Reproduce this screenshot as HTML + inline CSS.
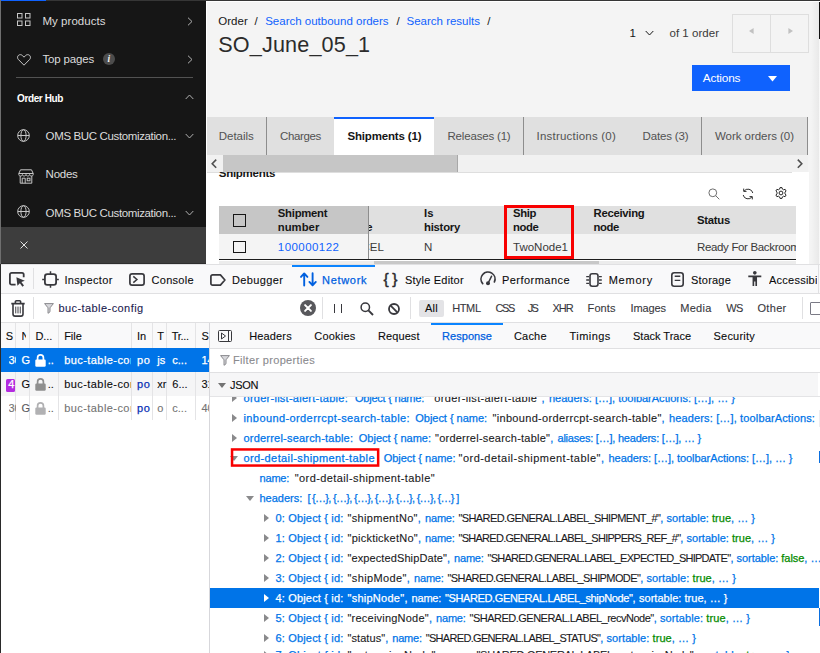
<!DOCTYPE html>
<html><head><meta charset="utf-8"><title>Order details</title>
<style>
*{box-sizing:border-box;margin:0;padding:0}
html,body{width:820px;height:653px;overflow:hidden;background:#fff}
body{position:relative;font-family:"Liberation Sans",sans-serif;font-size:12px;color:#161616}
.a{position:absolute}
.t{position:absolute;white-space:nowrap;line-height:1}
svg{position:absolute;overflow:visible}

#app{position:absolute;left:0;top:0;width:820px;height:264px;background:#f4f4f4;overflow:hidden}
#dt{position:absolute;left:0;top:264px;width:820px;height:389px;background:#fff;overflow:hidden}
.box{position:absolute}

</style></head><body>
<div id="app">
<div class="a" style="left:0px;top:0px;width:206px;height:227px;background:#161616;"></div>
<div class="a" style="left:0px;top:227px;width:206px;height:37px;background:#3d3d3d;"></div>
<div class="a" style="left:0px;top:263px;width:206px;height:1px;background:#2e2e2e;"></div>
<span class="t" style="left:42.50px;top:15.77px;font-size:11.5px;color:#dcdcdc;letter-spacing:0.033px;">My products</span>
<span class="t" style="left:42.50px;top:53.77px;font-size:11.5px;color:#dcdcdc;letter-spacing:-0.153px;">Top pages</span>
<div class="a" style="left:16px;top:77px;width:177px;height:1px;background:#525252;"></div>
<span class="t" style="left:17.00px;top:93.53px;font-size:10.0px;color:#ffffff;letter-spacing:-0.384px;font-weight:700;">Order Hub</span>
<span class="t" style="left:45.60px;top:130.97px;font-size:11.5px;color:#dcdcdc;letter-spacing:-0.364px;">OMS BUC Customization...</span>
<span class="t" style="left:45.60px;top:168.77px;font-size:11.5px;color:#dcdcdc;letter-spacing:-0.250px;">Nodes</span>
<span class="t" style="left:45.60px;top:207.97px;font-size:11.5px;color:#dcdcdc;letter-spacing:-0.364px;">OMS BUC Customization...</span>
<svg style="left:17px;top:13px" width="14" height="13" viewBox="0 0 14 13" fill="none" stroke="#c6c6c6" stroke-width="1"><rect x="0.5" y="0.5" width="4.5" height="4.5"/><rect x="8.5" y="0.5" width="4.5" height="4.5"/><rect x="0.5" y="8" width="4.5" height="4.5"/><rect x="8.5" y="8" width="4.5" height="4.5"/></svg>
<svg style="left:16.5px;top:53.5px" width="14" height="12" viewBox="0 0 14 12" fill="none" stroke="#c6c6c6" stroke-width="1"><path d="M7 11.2 L1.3 5.4 C0.2 4.2 0.3 2.3 1.5 1.3 C2.7 0.3 4.4 0.5 5.5 1.6 L7 3.2 L8.5 1.6 C9.6 0.5 11.3 0.3 12.5 1.3 C13.7 2.3 13.8 4.2 12.7 5.4 Z"/></svg>
<div class="a" style="left:102.8px;top:53px;width:12px;height:12px;border-radius:6px;background:#4c4c4c"></div>
<span class="t" style="left:107.60px;top:54.56px;font-size:9.5px;color:#f4f4f4;font-weight:700;font-style:italic;font-family:'Liberation Serif',serif;">i</span>
<svg style="left:186.5px;top:16.8px" width="6" height="9" viewBox="0 0 6 9" fill="none" stroke="#b0b0b0" stroke-width="1"><path d="M1 0.7 L5 4.5 L1 8.3"/></svg>
<svg style="left:186.5px;top:54.8px" width="6" height="9" viewBox="0 0 6 9" fill="none" stroke="#b0b0b0" stroke-width="1"><path d="M1 0.7 L5 4.5 L1 8.3"/></svg>
<svg style="left:184.5px;top:94.3px" width="9" height="6" viewBox="0 0 9 6" fill="none" stroke="#b0b0b0" stroke-width="1"><path d="M0.7 5 L4.5 1 L8.3 5"/></svg>
<svg style="left:184.5px;top:133px" width="9" height="6" viewBox="0 0 9 6" fill="none" stroke="#b0b0b0" stroke-width="1"><path d="M0.7 1 L4.5 5 L8.3 1"/></svg>
<svg style="left:184.5px;top:210px" width="9" height="6" viewBox="0 0 9 6" fill="none" stroke="#b0b0b0" stroke-width="1"><path d="M0.7 1 L4.5 5 L8.3 1"/></svg>
<svg style="left:17px;top:129px" width="13" height="13" viewBox="0 0 13 13" fill="none" stroke="#c6c6c6" stroke-width="1"><circle cx="6.5" cy="6.5" r="5.8"/><ellipse cx="6.5" cy="6.5" rx="2.6" ry="5.8"/><path d="M0.7 6.5 H12.3"/></svg>
<svg style="left:17px;top:205px" width="13" height="13" viewBox="0 0 13 13" fill="none" stroke="#c6c6c6" stroke-width="1"><circle cx="6.5" cy="6.5" r="5.8"/><ellipse cx="6.5" cy="6.5" rx="2.6" ry="5.8"/><path d="M0.7 6.5 H12.3"/></svg>
<svg style="left:18px;top:168.5px" width="16" height="15" viewBox="0 0 16 15" fill="none" stroke="#c6c6c6" stroke-width="1"><path d="M2.5 0.8 H13.5 L15.2 4.5 V5.5 C15.2 6.5 14.3 7 13.4 7 C12.5 7 11.6 6.5 11.6 5.5 C11.6 6.5 10.7 7 9.8 7 C8.9 7 8 6.5 8 5.5 C8 6.5 7.1 7 6.2 7 C5.3 7 4.4 6.5 4.4 5.5 C4.4 6.5 3.5 7 2.6 7 C1.7 7 0.8 6.5 0.8 5.5 V4.5 Z"/><path d="M0.8 4.5 H15.2"/><path d="M2.2 7 V14.2 H13.8 V7"/><path d="M4.2 14.2 V9.2 H7.2 V14.2"/><rect x="9.2" y="9.2" width="2.8" height="2.6"/></svg>
<svg style="left:20px;top:241px" width="8" height="8" viewBox="0 0 8 8" fill="none" stroke="#e0e0e0" stroke-width="1"><path d="M0.5 0.5 L7.5 7.5 M7.5 0.5 L0.5 7.5"/></svg>
<span class="t" style="left:218.20px;top:16.17px;font-size:11.5px;color:#161616;letter-spacing:0.039px;">Order</span>
<span class="t" style="left:254.60px;top:16.17px;font-size:11.5px;color:#161616;">/</span>
<span class="t" style="left:265.20px;top:16.17px;font-size:11.5px;color:#0f62fe;letter-spacing:0.000px;">Search outbound orders</span>
<span class="t" style="left:396.50px;top:16.17px;font-size:11.5px;color:#161616;">/</span>
<span class="t" style="left:406.50px;top:16.17px;font-size:11.5px;color:#0f62fe;letter-spacing:-0.001px;">Search results</span>
<span class="t" style="left:487.20px;top:16.17px;font-size:11.5px;color:#161616;">/</span>
<span class="t" style="left:218.30px;top:33.62px;font-size:21.6px;color:#2b2b2b;letter-spacing:0.159px;">SO_June_05_1</span>
<span class="t" style="left:629.50px;top:28.17px;font-size:11.5px;color:#161616;">1</span>
<svg style="left:644.5px;top:30px" width="9" height="6" viewBox="0 0 9 6" fill="none" stroke="#161616" stroke-width="1"><path d="M0.7 1 L4.5 5 L8.3 1"/></svg>
<span class="t" style="left:669.50px;top:28.17px;font-size:11.5px;color:#393939;letter-spacing:0.027px;">of 1 order</span>
<div class="a" style="left:732px;top:14px;width:77px;height:39px;border:1px solid #dedede;"></div>
<div class="a" style="left:770px;top:14px;width:1px;height:39px;background:#dedede;"></div>
<svg style="left:748.5px;top:27.8px" width="5" height="6" viewBox="0 0 5 6"><path d="M4.6 0 L0 3 L4.6 6 Z" fill="#c1c1c1"/></svg>
<svg style="left:788px;top:27.8px" width="5" height="6" viewBox="0 0 5 6"><path d="M0.4 0 L5 3 L0.4 6 Z" fill="#c1c1c1"/></svg>
<div class="a" style="left:692px;top:65px;width:98px;height:26px;background:#0f62fe;"></div>
<span class="t" style="left:702.80px;top:73.01px;font-size:11.8px;color:#ffffff;letter-spacing:-0.170px;">Actions</span>
<svg style="left:768.2px;top:76.2px" width="9" height="5.6" viewBox="0 0 9 5.6"><path d="M0 0 H9 L4.5 5.6 Z" fill="#fff"/></svg>
<div class="a" style="left:206px;top:117px;width:602px;height:38px;background:#e0e0e0;"></div>
<div class="a" style="left:334px;top:117px;width:100px;height:38px;background:#ffffff;"></div>
<div class="a" style="left:334px;top:117px;width:100px;height:2px;background:#0f62fe;"></div>
<div class="a" style="left:266px;top:117px;width:1px;height:38px;background:#8d8d8d;"></div>
<div class="a" style="left:523px;top:117px;width:1px;height:38px;background:#8d8d8d;"></div>
<div class="a" style="left:701px;top:117px;width:1px;height:38px;background:#8d8d8d;"></div>
<div class="a" style="left:807px;top:117px;width:1px;height:38px;background:#8d8d8d;"></div>
<span class="t" style="left:218.70px;top:130.67px;font-size:11.5px;color:#525252;letter-spacing:0.006px;">Details</span>
<span class="t" style="left:280.00px;top:130.67px;font-size:11.5px;color:#525252;letter-spacing:-0.353px;">Charges</span>
<span class="t" style="left:347.50px;top:130.67px;font-size:11.5px;color:#161616;letter-spacing:-0.173px;font-weight:700;">Shipments (1)</span>
<span class="t" style="left:447.50px;top:130.67px;font-size:11.5px;color:#525252;letter-spacing:-0.184px;">Releases (1)</span>
<span class="t" style="left:536.50px;top:130.67px;font-size:11.5px;color:#525252;letter-spacing:0.215px;">Instructions (0)</span>
<span class="t" style="left:642.50px;top:130.67px;font-size:11.5px;color:#525252;letter-spacing:-0.144px;">Dates (3)</span>
<span class="t" style="left:715.00px;top:130.67px;font-size:11.5px;color:#525252;letter-spacing:-0.045px;">Work orders (0)</span>
<div class="a" style="left:206px;top:155px;width:602px;height:17px;background:#f1f1f1;"></div>
<div class="a" style="left:223px;top:155.4px;width:234.5px;height:16.4px;background:#c6c6c6;"></div>
<div class="a" style="left:457px;top:155.4px;width:1px;height:16.4px;background:#a8a8a8;"></div>
<svg style="left:210.5px;top:158.6px" width="6" height="9.4" viewBox="0 0 6 9.4" fill="none" stroke="#505050" stroke-width="1.6"><path d="M5.2 0.6 L1.2 4.7 L5.2 8.8"/></svg>
<svg style="left:797px;top:158.6px" width="6" height="9.4" viewBox="0 0 6 9.4" fill="none" stroke="#505050" stroke-width="1.6"><path d="M0.8 0.6 L4.8 4.7 L0.8 8.8"/></svg>
<div class="a" style="left:206px;top:172px;width:602.5px;height:92px;background:#ffffff;"></div>
<div class="a" style="left:206px;top:171.5px;width:586px;height:1px;background:#dedede;"></div>
<div class="a" style="left:206px;top:172px;width:200px;height:12px;overflow:hidden">
<span class="t" style="left:12.80px;top:-3.83px;font-size:11.5px;color:#161616;letter-spacing:-0.277px;font-weight:700;">Shipments</span>
</div>
<svg style="left:707.5px;top:188px" width="12" height="12" viewBox="0 0 12 12" fill="none" stroke="#6f6f6f" stroke-width="1"><circle cx="4.8" cy="4.8" r="3.9"/><path d="M7.6 7.6 L11.3 11.3"/></svg>
<svg style="left:742px;top:187.5px" width="12" height="12" viewBox="0 0 12 12" fill="none" stroke="#262626" stroke-width="0.95"><g transform="translate(12,0) scale(-1,1)"><path d="M1.2 5 A4.9 4.9 0 0 1 10 3.2"/><path d="M10.8 7 A4.9 4.9 0 0 1 2 8.8"/><path d="M10.3 0.6 V3.4 H7.5"/><path d="M1.7 11.4 V8.6 H4.5"/></g></svg>
<svg style="left:774.5px;top:187px" width="12" height="12" viewBox="0 0 12 12" fill="none" stroke="#262626" stroke-width="1"><circle cx="6" cy="6" r="1.9"/><path d="M5 0.6 H7 L7.4 2.1 L8.6 2.8 L10.1 2.3 L11.1 4 L10 5.1 V6.9 L11.1 8 L10.1 9.7 L8.6 9.2 L7.4 9.9 L7 11.4 H5 L4.6 9.9 L3.4 9.2 L1.9 9.7 L0.9 8 L2 6.9 V5.1 L0.9 4 L1.9 2.3 L3.4 2.8 L4.6 2.1 Z"/></svg>
<div class="a" style="left:219px;top:206px;width:577px;height:28px;background:#e0e0e0;"></div>
<div class="a" style="left:219px;top:206px;width:149px;height:28px;background:#c6c6c6;"></div>
<div class="a" style="left:219px;top:234px;width:577px;height:25px;background:#f4f4f4;"></div>
<div class="a" style="left:368px;top:206px;width:1px;height:53px;background:#8d8d8d;"></div>
<div class="a" style="left:219px;top:259px;width:577px;height:1px;background:#1c1c1c;"></div>
<div class="a" style="left:219px;top:261px;width:577px;height:3px;background:#ececec;"></div>
<div class="a" style="left:374px;top:261px;width:225px;height:3px;background:#c8c8c8;"></div>
<div class="a" style="left:232.5px;top:213.7px;width:13px;height:13px;border:1px solid #161616;"></div>
<div class="a" style="left:232.5px;top:240.8px;width:13px;height:12.6px;border:1px solid #161616;"></div>
<span class="t" style="left:277.80px;top:208.13px;font-size:11.3px;color:#161616;letter-spacing:-0.246px;font-weight:700;">Shipment</span>
<span class="t" style="left:277.80px;top:222.03px;font-size:11.3px;color:#161616;letter-spacing:0.010px;font-weight:700;">number</span>
<span class="t" style="left:277.80px;top:241.57px;font-size:11.5px;color:#0f62fe;letter-spacing:0.438px;">100000122</span>
<div class="a" style="left:369px;top:206px;width:40px;height:52px;overflow:hidden">
<span class="t" style="left:-2.80px;top:16.03px;font-size:11.3px;color:#161616;font-weight:700;">e</span>
<span class="t" style="left:-7.50px;top:35.57px;font-size:11.5px;color:#393939;">CEL</span>
</div>
<span class="t" style="left:424.00px;top:208.13px;font-size:11.3px;color:#161616;font-weight:700;">Is</span>
<span class="t" style="left:424.00px;top:222.03px;font-size:11.3px;color:#161616;letter-spacing:-0.239px;font-weight:700;">history</span>
<span class="t" style="left:424.00px;top:241.57px;font-size:11.5px;color:#393939;">N</span>
<span class="t" style="left:513.00px;top:208.13px;font-size:11.3px;color:#161616;letter-spacing:-0.371px;font-weight:700;">Ship</span>
<span class="t" style="left:513.00px;top:222.03px;font-size:11.3px;color:#161616;letter-spacing:-0.375px;font-weight:700;">node</span>
<span class="t" style="left:513.00px;top:241.57px;font-size:11.5px;color:#393939;letter-spacing:0.002px;">TwoNode1</span>
<span class="t" style="left:593.50px;top:208.13px;font-size:11.3px;color:#161616;letter-spacing:-0.264px;font-weight:700;">Receiving</span>
<span class="t" style="left:593.50px;top:222.03px;font-size:11.3px;color:#161616;letter-spacing:-0.375px;font-weight:700;">node</span>
<span class="t" style="left:697.00px;top:215.13px;font-size:11.3px;color:#161616;letter-spacing:-0.255px;font-weight:700;">Status</span>
<div class="a" style="left:690px;top:236px;width:106px;height:22px;overflow:hidden">
<span class="t" style="left:7.00px;top:5.57px;font-size:11.5px;color:#393939;letter-spacing:-0.342px;">Ready For Backroom</span>
</div>
<div class="a" style="left:504px;top:205px;width:70px;height:54px;border:3px solid #f80000;"></div>
<div class="a" style="left:811px;top:0px;width:8px;height:264px;background:linear-gradient(90deg,#f4f4f4,#e9e9e9);"></div>
<div class="a" style="left:818.7px;top:0px;width:1.3px;height:38.7px;background:#111;"></div>
<div class="a" style="left:818.7px;top:38.7px;width:1.3px;height:226px;background:#f8f8f8;"></div>
</div>
<div id="dt"></div>
<div class="a" style="left:0px;top:264px;width:820px;height:29px;background:#f9f9fa;"></div>
<div class="a" style="left:0px;top:264px;width:820px;height:1px;background:#e0e0e2;"></div>
<div class="a" style="left:0px;top:293px;width:820px;height:1px;background:#e0e0e2;"></div>
<div class="a" style="left:292px;top:265px;width:83px;height:2px;background:#0a84ff;"></div>
<div class="a" style="left:33px;top:268px;width:1px;height:21px;background:#e0e0e2;"></div>
<span class="t" style="left:64.40px;top:274.89px;font-size:11.0px;color:#0c0c0d;letter-spacing:0.339px;-webkit-text-stroke:0.1px;">Inspector</span>
<span class="t" style="left:151.60px;top:274.89px;font-size:11.0px;color:#0c0c0d;letter-spacing:0.263px;-webkit-text-stroke:0.1px;">Console</span>
<span class="t" style="left:232.00px;top:274.89px;font-size:11.0px;color:#0c0c0d;letter-spacing:0.384px;-webkit-text-stroke:0.1px;">Debugger</span>
<span class="t" style="left:322.00px;top:274.89px;font-size:11.0px;color:#0060df;letter-spacing:0.694px;-webkit-text-stroke:0.25px;">Network</span>
<span class="t" style="left:405.00px;top:274.89px;font-size:11.0px;color:#0c0c0d;letter-spacing:0.212px;-webkit-text-stroke:0.1px;">Style Editor</span>
<span class="t" style="left:502.00px;top:274.89px;font-size:11.0px;color:#0c0c0d;letter-spacing:0.456px;-webkit-text-stroke:0.1px;">Performance</span>
<span class="t" style="left:608.70px;top:274.89px;font-size:11.0px;color:#0c0c0d;letter-spacing:0.761px;-webkit-text-stroke:0.1px;">Memory</span>
<span class="t" style="left:691.00px;top:274.89px;font-size:11.0px;color:#0c0c0d;letter-spacing:0.210px;-webkit-text-stroke:0.1px;">Storage</span>
<div class="a" style="left:769px;top:270px;width:47.5px;height:20px;overflow:hidden">
<span class="t" style="left:0.00px;top:4.89px;font-size:11.0px;color:#0c0c0d;letter-spacing:0.238px;-webkit-text-stroke:0.1px;">Accessibility</span>
</div>
<svg style="left:9px;top:272px" width="17" height="15" viewBox="0 0 17 15" fill="none" stroke="#38383d" stroke-width="1.8"><path d="M6.6 12.6 H2.6 A1.7 1.7 0 0 1 0.9 10.9 V2.6 A1.7 1.7 0 0 1 2.6 0.9 H13 A1.7 1.7 0 0 1 14.7 2.6 V5.2"/><path d="M7.4 5.2 L15.8 8.8 L12.4 10.1 L15 13.5 L13.4 14.7 L10.9 11.2 L8.4 13.8 Z" fill="#38383d" stroke="none"/></svg>
<svg style="left:42px;top:270.5px" width="17" height="17" viewBox="0 0 17 17" fill="none" stroke="#38383d" stroke-width="1.8"><rect x="2.9" y="3.2" width="11.2" height="10.6" rx="2.4"/><path d="M8.5 0.3 V3 M8.5 14 V16.7 M0.2 8.5 H2.6 M14.4 8.5 H16.8" stroke-width="1.5"/></svg>
<svg style="left:129.4px;top:272.6px" width="16" height="13" viewBox="0 0 16 13" fill="none" stroke="#38383d" stroke-width="1.7"><rect x="0.9" y="0.9" width="14.2" height="11.2" rx="2.2"/><path d="M4.3 3.4 L7.9 6.5 L4.3 9.6" stroke-width="1.5"/></svg>
<svg style="left:210.3px;top:273.5px" width="16" height="12" viewBox="0 0 16 12" fill="none" stroke="#38383d" stroke-width="1.7" stroke-linejoin="round"><path d="M2.6 0.9 H10.4 L14.9 6 L10.4 11.1 H2.6 A1.7 1.7 0 0 1 0.9 9.4 V2.6 A1.7 1.7 0 0 1 2.6 0.9 Z"/></svg>
<svg style="left:299.5px;top:271.5px" width="17" height="15" viewBox="0 0 17 15" fill="none" stroke="#0060df" stroke-width="1.9" stroke-linecap="round" stroke-linejoin="round"><path d="M4.2 13.6 V1.6 M1 4.9 L4.2 1.4 L7.4 4.9"/><path d="M12.6 1.2 V13.2 M9.4 9.9 L12.6 13.4 L15.8 9.9"/></svg>
<span class="t" style="left:383.40px;top:271.08px;font-size:15.5px;color:#2a2a2e;letter-spacing:3.6px;-webkit-text-stroke:0.45px;">{}</span>
<svg style="left:480px;top:270.8px" width="16" height="16" viewBox="0 0 16 16" fill="none" stroke="#38383d" stroke-width="1.7" stroke-linecap="round"><path d="M2.7 12.6 A7 7 0 1 1 14.4 10.9"/><path d="M8.2 12 L11.6 5.2" stroke-width="1.5"/><circle cx="8" cy="12.2" r="2" fill="#38383d" stroke="none"/></svg>
<svg style="left:585px;top:272.5px" width="18" height="14" viewBox="0 0 18 14" fill="none" stroke="#38383d" stroke-width="1.6"><rect x="5" y="0.8" width="8" height="12.4" rx="2.2"/><path d="M1.2 3.6 H4 M1.2 7 H4 M1.2 10.4 H4 M14 3.6 H16.8 M14 7 H16.8 M14 10.4 H16.8" stroke-width="1.3"/></svg>
<svg style="left:670.5px;top:272px" width="13" height="15" viewBox="0 0 13 15" fill="none" stroke="#38383d" stroke-width="1.6"><rect x="0.8" y="0.8" width="11.4" height="13.4" rx="2.4"/><path d="M3.7 4.3 H9.3 M3.7 8.4 H9.3" stroke-width="1.4"/></svg>
<svg style="left:748.4px;top:270.6px" width="13.6" height="15.4" viewBox="0 0 14 16" preserveAspectRatio="none" fill="#38383d"><circle cx="7" cy="1.9" r="1.9"/><path d="M0.3 4.6 H13.7 V6.6 H9.3 V15.6 H7.6 V11 H6.4 V15.6 H4.7 V6.6 H0.3 Z"/></svg>
<div class="a" style="left:818px;top:264px;width:1px;height:85px;background:#e0e0e2;"></div>
<div class="a" style="left:0px;top:294px;width:820px;height:28px;background:#ffffff;"></div>
<div class="a" style="left:0px;top:322px;width:820px;height:1px;background:#e0e0e2;"></div>
<div class="a" style="left:33px;top:297px;width:1px;height:22px;background:#e0e0e2;"></div>
<div class="a" style="left:322px;top:297px;width:1px;height:22px;background:#e0e0e2;"></div>
<div class="a" style="left:410px;top:297px;width:1px;height:22px;background:#e0e0e2;"></div>
<div class="a" style="left:802px;top:297px;width:1px;height:22px;background:#e0e0e2;"></div>
<span class="t" style="left:58.40px;top:303.09px;font-size:11.0px;color:#1c1c50;letter-spacing:0.432px;-webkit-text-stroke:0.1px;">buc-table-config</span>
<svg style="left:10.5px;top:300.3px" width="14" height="17" viewBox="0 0 14 17" fill="none" stroke="#38383d" stroke-width="1.6"><path d="M0.3 3.6 H13.7 M4.4 3.4 V1.8 A1 1 0 0 1 5.4 0.8 H8.6 A1 1 0 0 1 9.6 1.8 V3.4"/><path d="M2 4 V14 A2.1 2.1 0 0 0 4.1 16.1 H9.9 A2.1 2.1 0 0 0 12 14 V4"/><path d="M4.75 6.6 V13.4 M7 6.6 V13.4 M9.25 6.6 V13.4" stroke-width="0.95"/></svg>
<svg style="left:44.3px;top:302.5px" width="10" height="11" viewBox="0 0 10 11" fill="#d7d7db" stroke="#8a8a8e" stroke-width="1" stroke-linejoin="round"><path d="M0.6 0.6 H9.4 L6 4.8 V8.8 L4 10.3 V4.8 Z"/></svg>
<svg style="left:299.8px;top:299.8px" width="16" height="16" viewBox="0 0 16 16"><circle cx="8" cy="8" r="8" fill="#58585c"/><path d="M5.1 5.1 L10.9 10.9 M10.9 5.1 L5.1 10.9" stroke="#fff" stroke-width="2" stroke-linecap="round"/></svg>
<div class="a" style="left:334px;top:303.5px;width:1px;height:9.5px;background:#38383d;"></div>
<div class="a" style="left:341px;top:303.5px;width:1px;height:9.5px;background:#38383d;"></div>
<svg style="left:360px;top:301.8px" width="14" height="14" viewBox="0 0 14 14" fill="none" stroke="#38383d" stroke-width="1.5"><circle cx="5.3" cy="5.3" r="4.2"/><path d="M8.4 8.4 L13 13" stroke-width="1.9"/></svg>
<svg style="left:387px;top:302px" width="14" height="14" viewBox="0 0 14 14" fill="none" stroke="#38383d" stroke-width="1.8"><circle cx="7" cy="7" r="5"/><path d="M3.4 3.4 L10.6 10.6"/></svg>
<div class="a" style="left:419.3px;top:299.5px;width:24.7px;height:17px;background:#e3e3e6;border-radius:2px;"></div>
<span class="t" style="left:425.00px;top:303.09px;font-size:11.0px;color:#0c0c0d;letter-spacing:0.189px;-webkit-text-stroke:0.1px;">All</span>
<span class="t" style="left:452.20px;top:303.09px;font-size:11.0px;color:#38383d;letter-spacing:-0.363px;-webkit-text-stroke:0.1px;">HTML</span>
<span class="t" style="left:495.50px;top:303.09px;font-size:11.0px;color:#38383d;letter-spacing:-1.375px;-webkit-text-stroke:0.1px;">CSS</span>
<span class="t" style="left:527.70px;top:303.09px;font-size:11.0px;color:#38383d;letter-spacing:-1.572px;-webkit-text-stroke:0.1px;">JS</span>
<span class="t" style="left:552.40px;top:303.09px;font-size:11.0px;color:#38383d;letter-spacing:-0.945px;-webkit-text-stroke:0.1px;">XHR</span>
<span class="t" style="left:587.60px;top:303.09px;font-size:11.0px;color:#38383d;letter-spacing:0.077px;-webkit-text-stroke:0.1px;">Fonts</span>
<span class="t" style="left:630.60px;top:303.09px;font-size:11.0px;color:#38383d;letter-spacing:-0.146px;-webkit-text-stroke:0.1px;">Images</span>
<span class="t" style="left:680.20px;top:303.09px;font-size:11.0px;color:#38383d;letter-spacing:0.326px;-webkit-text-stroke:0.1px;">Media</span>
<span class="t" style="left:726.20px;top:303.09px;font-size:11.0px;color:#38383d;letter-spacing:-0.467px;-webkit-text-stroke:0.1px;">WS</span>
<span class="t" style="left:757.40px;top:303.09px;font-size:11.0px;color:#38383d;letter-spacing:0.337px;-webkit-text-stroke:0.1px;">Other</span>
<div class="a" style="left:810px;top:302.2px;width:12px;height:12.6px;background:#ffffff;border:1px solid #7a7a85;border-radius:1px;"></div>
<div class="a" style="left:0px;top:323px;width:820px;height:25px;background:#f9f9fa;"></div>
<div class="a" style="left:0px;top:348px;width:820px;height:1px;background:#e0e0e2;"></div>
<div class="a" style="left:15px;top:323px;width:1px;height:97px;background:#e4e4e6;"></div>
<div class="a" style="left:29px;top:323px;width:1px;height:97px;background:#e4e4e6;"></div>
<div class="a" style="left:58px;top:323px;width:1px;height:97px;background:#e4e4e6;"></div>
<div class="a" style="left:131px;top:323px;width:1px;height:97px;background:#e4e4e6;"></div>
<div class="a" style="left:152px;top:323px;width:1px;height:97px;background:#e4e4e6;"></div>
<div class="a" style="left:166px;top:323px;width:1px;height:97px;background:#e4e4e6;"></div>
<div class="a" style="left:195px;top:323px;width:1px;height:97px;background:#e4e4e6;"></div>
<div class="a" style="left:209px;top:323px;width:1px;height:330px;background:#d7d7db;"></div>
<span class="t" style="left:5.80px;top:330.69px;font-size:11.0px;color:#0c0c0d;-webkit-text-stroke:0.1px;">S</span>
<div class="a" style="left:21.6px;top:326px;width:4.6px;height:20px;overflow:hidden">
<span class="t" style="left:0.00px;top:4.69px;font-size:11.0px;color:#0c0c0d;-webkit-text-stroke:0.1px;">N</span>
</div>
<span class="t" style="left:35.40px;top:330.69px;font-size:11.0px;color:#0c0c0d;letter-spacing:-0.031px;-webkit-text-stroke:0.1px;">D...</span>
<span class="t" style="left:64.20px;top:330.69px;font-size:11.0px;color:#0c0c0d;letter-spacing:-0.034px;-webkit-text-stroke:0.1px;">File</span>
<span class="t" style="left:137.00px;top:330.69px;font-size:11.0px;color:#0c0c0d;letter-spacing:0.056px;-webkit-text-stroke:0.1px;">In</span>
<span class="t" style="left:157.30px;top:330.69px;font-size:11.0px;color:#0c0c0d;-webkit-text-stroke:0.1px;">T</span>
<span class="t" style="left:171.70px;top:330.69px;font-size:11.0px;color:#0c0c0d;letter-spacing:-0.289px;-webkit-text-stroke:0.1px;">Tr...</span>
<span class="t" style="left:201.40px;top:330.69px;font-size:11.0px;color:#0c0c0d;-webkit-text-stroke:0.1px;">S</span>
<svg style="left:218px;top:329.5px" width="14" height="12" viewBox="0 0 14 12" fill="none" stroke="#38383d" stroke-width="1"><rect x="0.5" y="0.5" width="13" height="11" rx="1"/><path d="M10.5 0.5 V11.5"/><path d="M3.5 3 L7.5 6 L3.5 9 Z" /></svg>
<span class="t" style="left:249.30px;top:330.69px;font-size:11.0px;color:#0c0c0d;letter-spacing:0.132px;-webkit-text-stroke:0.1px;">Headers</span>
<span class="t" style="left:314.30px;top:330.69px;font-size:11.0px;color:#0c0c0d;letter-spacing:0.207px;-webkit-text-stroke:0.1px;">Cookies</span>
<span class="t" style="left:378.00px;top:330.69px;font-size:11.0px;color:#0c0c0d;letter-spacing:0.088px;-webkit-text-stroke:0.1px;">Request</span>
<span class="t" style="left:442.00px;top:330.69px;font-size:11.0px;color:#0060df;letter-spacing:0.057px;-webkit-text-stroke:0.25px;">Response</span>
<span class="t" style="left:514.00px;top:330.69px;font-size:11.0px;color:#0c0c0d;letter-spacing:0.181px;-webkit-text-stroke:0.1px;">Cache</span>
<span class="t" style="left:569.50px;top:330.69px;font-size:11.0px;color:#0c0c0d;letter-spacing:0.456px;-webkit-text-stroke:0.1px;">Timings</span>
<span class="t" style="left:633.00px;top:330.69px;font-size:11.0px;color:#0c0c0d;letter-spacing:-0.007px;-webkit-text-stroke:0.1px;">Stack Trace</span>
<span class="t" style="left:713.50px;top:330.69px;font-size:11.0px;color:#0c0c0d;letter-spacing:0.219px;-webkit-text-stroke:0.1px;">Security</span>
<div class="a" style="left:431px;top:323px;width:72px;height:2px;background:#0a84ff;"></div>
<div class="a" style="left:1px;top:348px;width:208px;height:24px;background:#0074e8;"></div>
<div class="a" style="left:1px;top:372px;width:208px;height:24px;background:#f5f5f6;"></div>
<div class="a" style="left:15px;top:372px;width:1px;height:48px;background:#e4e4e6;"></div>
<div class="a" style="left:29px;top:372px;width:1px;height:48px;background:#e4e4e6;"></div>
<div class="a" style="left:58px;top:372px;width:1px;height:48px;background:#e4e4e6;"></div>
<div class="a" style="left:131px;top:372px;width:1px;height:48px;background:#e4e4e6;"></div>
<div class="a" style="left:152px;top:372px;width:1px;height:48px;background:#e4e4e6;"></div>
<div class="a" style="left:166px;top:372px;width:1px;height:48px;background:#e4e4e6;"></div>
<div class="a" style="left:195px;top:372px;width:1px;height:48px;background:#e4e4e6;"></div>
<div class="a" style="left:8.5px;top:350.2px;width:7px;height:20px;overflow:hidden">
<span class="t" style="left:0.00px;top:4.69px;font-size:11.0px;color:#ffffff;-webkit-text-stroke:0.25px;">304</span>
</div>
<span class="t" style="left:21.50px;top:354.89px;font-size:11.0px;color:#ffffff;-webkit-text-stroke:0.25px;">G</span>
<svg style="left:34.5px;top:353.7px" width="11" height="13" viewBox="0 0 11 13"><path d="M2.6 6 V3.8 A2.9 2.9 0 0 1 8.4 3.8 V6" fill="none" stroke="#ffffff" stroke-width="1.7"/><rect x="0.3" y="5.6" width="10.4" height="7.2" rx="1.2" fill="#ffffff"/></svg>
<span class="t" style="left:47.70px;top:354.89px;font-size:11.0px;color:#ffffff;-webkit-text-stroke:0.25px;">..</span>
<div class="a" style="left:64px;top:350.2px;width:67px;height:20px;overflow:hidden">
<span class="t" style="left:0.20px;top:4.69px;font-size:11.0px;color:#ffffff;letter-spacing:0.432px;-webkit-text-stroke:0.25px;">buc-table-config</span>
</div>
<span class="t" style="left:137.00px;top:354.89px;font-size:11.0px;color:#ffffff;letter-spacing:0.675px;-webkit-text-stroke:0.25px;">po</span>
<span class="t" style="left:157.30px;top:354.89px;font-size:11.0px;color:#ffffff;-webkit-text-stroke:0.25px;">js</span>
<span class="t" style="left:172.30px;top:354.89px;font-size:11.0px;color:#ffffff;-webkit-text-stroke:0.25px;">c...</span>
<div class="a" style="left:201px;top:350.2px;width:8px;height:20px;overflow:hidden">
<span class="t" style="left:0.40px;top:4.69px;font-size:11.0px;color:#ffffff;-webkit-text-stroke:0.25px;">14</span>
</div>
<div class="a" style="left:5.8px;top:379.4px;width:9.4px;height:12.5px;background:#b32be0;border-radius:1.5px;"></div>
<span class="t" style="left:8.20px;top:379.09px;font-size:11.0px;color:#ffffff;-webkit-text-stroke:0.25px;">4</span>
<span class="t" style="left:21.50px;top:379.09px;font-size:11.0px;color:#0c0c0d;-webkit-text-stroke:0.1px;">G</span>
<svg style="left:34.5px;top:377.9px" width="11" height="13" viewBox="0 0 11 13"><path d="M2.6 6 V3.8 A2.9 2.9 0 0 1 8.4 3.8 V6" fill="none" stroke="#8f8f8f" stroke-width="1.7"/><rect x="0.3" y="5.6" width="10.4" height="7.2" rx="1.2" fill="#8f8f8f"/></svg>
<span class="t" style="left:47.70px;top:379.09px;font-size:11.0px;color:#0c0c0d;-webkit-text-stroke:0.1px;">..</span>
<div class="a" style="left:64px;top:374.4px;width:67px;height:20px;overflow:hidden">
<span class="t" style="left:0.20px;top:4.69px;font-size:11.0px;color:#0c0c0d;letter-spacing:0.432px;-webkit-text-stroke:0.1px;">buc-table-config</span>
</div>
<span class="t" style="left:137.00px;top:379.09px;font-size:11.0px;color:#0a2fb5;letter-spacing:0.675px;-webkit-text-stroke:0.25px;">po</span>
<span class="t" style="left:157.30px;top:379.09px;font-size:11.0px;color:#0c0c0d;-webkit-text-stroke:0.1px;">xr</span>
<span class="t" style="left:172.30px;top:379.09px;font-size:11.0px;color:#0c0c0d;-webkit-text-stroke:0.1px;">6...</span>
<div class="a" style="left:201px;top:374.4px;width:8px;height:20px;overflow:hidden">
<span class="t" style="left:0.40px;top:4.69px;font-size:11.0px;color:#0c0c0d;-webkit-text-stroke:0.1px;">31</span>
</div>
<div class="a" style="left:8.5px;top:398.5px;width:7px;height:20px;overflow:hidden">
<span class="t" style="left:0.00px;top:4.69px;font-size:11.0px;color:#737373;-webkit-text-stroke:0.1px;">304</span>
</div>
<span class="t" style="left:21.50px;top:403.19px;font-size:11.0px;color:#5a5a5e;-webkit-text-stroke:0.1px;">G</span>
<svg style="left:34.5px;top:402.0px" width="11" height="13" viewBox="0 0 11 13"><path d="M2.6 6 V3.8 A2.9 2.9 0 0 1 8.4 3.8 V6" fill="none" stroke="#b1b1b3" stroke-width="1.7"/><rect x="0.3" y="5.6" width="10.4" height="7.2" rx="1.2" fill="#b1b1b3"/></svg>
<span class="t" style="left:47.70px;top:403.19px;font-size:11.0px;color:#5a5a5e;-webkit-text-stroke:0.1px;">..</span>
<div class="a" style="left:64px;top:398.5px;width:67px;height:20px;overflow:hidden">
<span class="t" style="left:0.20px;top:4.69px;font-size:11.0px;color:#737373;letter-spacing:0.432px;-webkit-text-stroke:0.1px;">buc-table-config</span>
</div>
<span class="t" style="left:137.00px;top:403.19px;font-size:11.0px;color:#0a2fb5;letter-spacing:0.675px;-webkit-text-stroke:0.25px;">po</span>
<span class="t" style="left:157.30px;top:403.19px;font-size:11.0px;color:#737373;-webkit-text-stroke:0.1px;">o</span>
<span class="t" style="left:172.30px;top:403.19px;font-size:11.0px;color:#737373;-webkit-text-stroke:0.1px;">c...</span>
<div class="a" style="left:201px;top:398.5px;width:8px;height:20px;overflow:hidden">
<span class="t" style="left:0.40px;top:4.69px;font-size:11.0px;color:#737373;-webkit-text-stroke:0.1px;">40</span>
</div>
<div class="a" style="left:210px;top:349px;width:608px;height:23px;background:#ffffff;"></div>
<svg style="left:219.5px;top:354.5px" width="10" height="11" viewBox="0 0 10 11" fill="#d7d7db" stroke="#8a8a8e" stroke-width="1" stroke-linejoin="round"><path d="M0.6 0.6 H9.4 L6 4.8 V8.8 L4 10.3 V4.8 Z"/></svg>
<span class="t" style="left:233.00px;top:354.69px;font-size:11.0px;color:#8a8a8e;letter-spacing:0.328px;-webkit-text-stroke:0.1px;">Filter properties</span>
<div class="a" style="left:210px;top:372px;width:610px;height:1px;background:#e0e0e2;"></div>
<div class="a" style="left:210px;top:373px;width:608px;height:23px;background:#f6f6f7;"></div>
<div class="a" style="left:210px;top:396px;width:610px;height:1px;background:#e4e4e6;"></div>
<svg style="left:218px;top:382.5px" width="8" height="5" viewBox="0 0 8 5"><path d="M0 0 H8 L4 5 Z" fill="#737373"/></svg>
<span class="t" style="left:230.00px;top:379.99px;font-size:11.0px;color:#0c0c0d;letter-spacing:-0.336px;-webkit-text-stroke:0.1px;">JSON</span>
<div class="a" style="left:210px;top:397px;width:610px;height:256px;overflow:hidden">
<div class="a" style="left:0px;top:191px;width:609px;height:19.5px;background:#0074e8;"></div>
<div class="a" style="left:609px;top:210.5px;width:1px;height:18.5px;background:#0a6fe0;"></div>
<div class="a" style="left:609px;top:54px;width:1px;height:12px;background:#0a6fe0;"></div>
<div class="a" style="left:608.5px;top:13px;width:1.5px;height:17px;background:#ededf0;"></div>
<svg style="left:22px;top:-3px" width="5" height="8" viewBox="0 0 5 8"><path d="M0 0 L5 4 L0 8 Z" fill="#8a8a8c"/></svg>
<span class="t" style="left:33.50px;top:-4.01px;font-size:11.0px;color:#0074e8;letter-spacing:0.264px;-webkit-text-stroke:0.25px;"><span style="color:#0074e8;">order-list-alert-table:</span></span>
<span class="t" style="left:145.00px;top:-4.01px;font-size:11.0px;color:#0074e8;letter-spacing:-0.225px;-webkit-text-stroke:0.25px;"><span style="color:#0074e8;">Object { name:</span></span>
<span class="t" style="left:220.00px;top:-4.01px;font-size:11.0px;color:#0074e8;letter-spacing:0.350px;-webkit-text-stroke:0.25px;"><span style="color:#1a1a1c;-webkit-text-stroke-width:0.1px;">"order-list-alert-table"</span><span style="color:#0074e8;">,</span></span>
<span class="t" style="left:339.00px;top:-4.01px;font-size:11.0px;color:#0074e8;letter-spacing:0.003px;-webkit-text-stroke:0.25px;"><span style="color:#0074e8;">headers: […], toolbarActions: […], … }</span></span>
<svg style="left:22px;top:17px" width="5" height="8" viewBox="0 0 5 8"><path d="M0 0 L5 4 L0 8 Z" fill="#8a8a8c"/></svg>
<span class="t" style="left:33.50px;top:15.89px;font-size:11.0px;color:#0074e8;letter-spacing:0.400px;-webkit-text-stroke:0.25px;"><span style="color:#0074e8;">inbound-orderrcpt-search-table:</span></span>
<span class="t" style="left:205.30px;top:15.89px;font-size:11.0px;color:#0074e8;letter-spacing:-0.033px;-webkit-text-stroke:0.25px;"><span style="color:#0074e8;">Object { name:</span></span>
<span class="t" style="left:282.50px;top:15.89px;font-size:11.0px;color:#0074e8;letter-spacing:0.321px;-webkit-text-stroke:0.25px;"><span style="color:#1a1a1c;-webkit-text-stroke-width:0.1px;">"inbound-orderrcpt-search-table"</span><span style="color:#0074e8;">,</span></span>
<span class="t" style="left:459.00px;top:15.89px;font-size:11.0px;color:#0074e8;letter-spacing:0.143px;-webkit-text-stroke:0.25px;"><span style="color:#0074e8;">headers: […], toolbarActions:</span></span>
<span class="t" style="left:612.00px;top:15.89px;font-size:11.0px;color:#0074e8;letter-spacing:0.004px;-webkit-text-stroke:0.25px;"><span style="color:#0074e8;">[…], … }</span></span>
<svg style="left:22px;top:37px" width="5" height="8" viewBox="0 0 5 8"><path d="M0 0 L5 4 L0 8 Z" fill="#8a8a8c"/></svg>
<span class="t" style="left:33.50px;top:35.89px;font-size:11.0px;color:#0074e8;letter-spacing:0.207px;-webkit-text-stroke:0.25px;"><span style="color:#0074e8;">orderrel-search-table:</span></span>
<span class="t" style="left:148.80px;top:35.89px;font-size:11.0px;color:#0074e8;letter-spacing:0.003px;-webkit-text-stroke:0.25px;"><span style="color:#0074e8;">Object { name:</span></span>
<span class="t" style="left:225.00px;top:35.89px;font-size:11.0px;color:#0074e8;letter-spacing:0.230px;-webkit-text-stroke:0.25px;"><span style="color:#1a1a1c;-webkit-text-stroke-width:0.1px;">"orderrel-search-table"</span><span style="color:#0074e8;">,</span></span>
<span class="t" style="left:347.50px;top:35.89px;font-size:11.0px;color:#0074e8;letter-spacing:-0.223px;-webkit-text-stroke:0.25px;"><span style="color:#0074e8;">aliases: […], headers: […], … }</span></span>
<svg style="left:19.599999999999994px;top:58.80000000000001px" width="8" height="5" viewBox="0 0 8 5"><path d="M0 0 H8 L4 5 Z" fill="#8a8a8c"/></svg>
<span class="t" style="left:33.50px;top:55.89px;font-size:11.0px;color:#0074e8;letter-spacing:0.389px;-webkit-text-stroke:0.25px;"><span style="color:#0074e8;">ord-detail-shipment-table</span></span>
<span class="t" style="left:173.70px;top:55.89px;font-size:11.0px;color:#0074e8;letter-spacing:-0.025px;-webkit-text-stroke:0.25px;"><span style="color:#0074e8;">Object { name:</span></span>
<span class="t" style="left:248.50px;top:55.89px;font-size:11.0px;color:#0074e8;letter-spacing:0.480px;-webkit-text-stroke:0.25px;"><span style="color:#1a1a1c;-webkit-text-stroke-width:0.1px;">"ord-detail-shipment-table"</span><span style="color:#0074e8;">,</span></span>
<span class="t" style="left:398.50px;top:55.89px;font-size:11.0px;color:#0074e8;letter-spacing:-0.049px;-webkit-text-stroke:0.25px;"><span style="color:#0074e8;">headers: […], toolbarActions: […], … }</span></span>
<span class="t" style="left:49.50px;top:75.89px;font-size:11.0px;color:#0074e8;letter-spacing:-0.176px;-webkit-text-stroke:0.25px;"><span style="color:#0074e8;">name:</span></span>
<span class="t" style="left:84.80px;top:75.89px;font-size:11.0px;color:#0074e8;letter-spacing:0.397px;-webkit-text-stroke:0.25px;"><span style="color:#1a1a1c;-webkit-text-stroke-width:0.1px;">"ord-detail-shipment-table"</span></span>
<svg style="left:36px;top:99.0px" width="8" height="5" viewBox="0 0 8 5"><path d="M0 0 H8 L4 5 Z" fill="#8a8a8c"/></svg>
<span class="t" style="left:49.50px;top:95.89px;font-size:11.0px;color:#0074e8;letter-spacing:-0.014px;-webkit-text-stroke:0.25px;"><span style="color:#0074e8;">headers:</span></span>
<span class="t" style="left:97.40px;top:95.89px;font-size:11.0px;color:#0074e8;letter-spacing:-0.709px;-webkit-text-stroke:0.25px;"><span style="color:#0074e8;">[ {…}, {…}, {…}, {…}, {…}, {…}, {…} ]</span></span>
<svg style="left:53.69999999999999px;top:116.79999999999995px" width="5" height="8" viewBox="0 0 5 8"><path d="M0 0 L5 4 L0 8 Z" fill="#8a8a8c"/></svg>
<span class="t" style="left:65.50px;top:115.89px;font-size:11.0px;color:#0074e8;letter-spacing:0.171px;-webkit-text-stroke:0.25px;"><span style="color:#0074e8;">0: Object { id:</span></span>
<span class="t" style="left:137.50px;top:115.89px;font-size:11.0px;color:#0074e8;letter-spacing:0.317px;-webkit-text-stroke:0.25px;"><span style="color:#1a1a1c;-webkit-text-stroke-width:0.1px;">"shipmentNo"</span><span style="color:#0074e8;">,</span></span>
<span class="t" style="left:215.00px;top:115.89px;font-size:11.0px;color:#0074e8;letter-spacing:-0.176px;-webkit-text-stroke:0.25px;"><span style="color:#0074e8;">name:</span></span>
<span class="t" style="left:248.50px;top:115.89px;font-size:11.0px;color:#0074e8;letter-spacing:-0.607px;-webkit-text-stroke:0.25px;"><span style="color:#1a1a1c;-webkit-text-stroke-width:0.1px;">"SHARED.GENERAL.LABEL_SHIPMENT_#"</span><span style="color:#0074e8;">,</span></span>
<span class="t" style="left:456.50px;top:115.89px;font-size:11.0px;color:#0074e8;letter-spacing:0.023px;-webkit-text-stroke:0.25px;"><span style="color:#0074e8;">sortable:</span><span style="color:#058b00;"> true</span><span style="color:#0074e8;">, … }</span></span>
<svg style="left:53.69999999999999px;top:136.79999999999995px" width="5" height="8" viewBox="0 0 5 8"><path d="M0 0 L5 4 L0 8 Z" fill="#8a8a8c"/></svg>
<span class="t" style="left:65.50px;top:135.89px;font-size:11.0px;color:#0074e8;letter-spacing:0.171px;-webkit-text-stroke:0.25px;"><span style="color:#0074e8;">1: Object { id:</span></span>
<span class="t" style="left:137.50px;top:135.89px;font-size:11.0px;color:#0074e8;letter-spacing:0.235px;-webkit-text-stroke:0.25px;"><span style="color:#1a1a1c;-webkit-text-stroke-width:0.1px;">"pickticketNo"</span><span style="color:#0074e8;">,</span></span>
<span class="t" style="left:215.00px;top:135.89px;font-size:11.0px;color:#0074e8;letter-spacing:-0.176px;-webkit-text-stroke:0.25px;"><span style="color:#0074e8;">name:</span></span>
<span class="t" style="left:248.50px;top:135.89px;font-size:11.0px;color:#0074e8;letter-spacing:-0.725px;-webkit-text-stroke:0.25px;"><span style="color:#1a1a1c;-webkit-text-stroke-width:0.1px;">"SHARED.GENERAL.LABEL_SHIPPERS_REF_#"</span><span style="color:#0074e8;">,</span></span>
<span class="t" style="left:476.50px;top:135.89px;font-size:11.0px;color:#0074e8;letter-spacing:0.023px;-webkit-text-stroke:0.25px;"><span style="color:#0074e8;">sortable:</span><span style="color:#058b00;"> true</span><span style="color:#0074e8;">, … }</span></span>
<svg style="left:53.69999999999999px;top:156.79999999999995px" width="5" height="8" viewBox="0 0 5 8"><path d="M0 0 L5 4 L0 8 Z" fill="#8a8a8c"/></svg>
<span class="t" style="left:65.50px;top:155.89px;font-size:11.0px;color:#0074e8;letter-spacing:0.171px;-webkit-text-stroke:0.25px;"><span style="color:#0074e8;">2: Object { id:</span></span>
<span class="t" style="left:137.50px;top:155.89px;font-size:11.0px;color:#0074e8;letter-spacing:0.101px;-webkit-text-stroke:0.25px;"><span style="color:#1a1a1c;-webkit-text-stroke-width:0.1px;">"expectedShipDate"</span><span style="color:#0074e8;">,</span></span>
<span class="t" style="left:244.00px;top:155.89px;font-size:11.0px;color:#0074e8;letter-spacing:-0.176px;-webkit-text-stroke:0.25px;"><span style="color:#0074e8;">name:</span></span>
<span class="t" style="left:277.50px;top:155.89px;font-size:11.0px;color:#0074e8;letter-spacing:-0.736px;-webkit-text-stroke:0.25px;"><span style="color:#1a1a1c;-webkit-text-stroke-width:0.1px;">"SHARED.GENERAL.LABEL_EXPECTED_SHIPDATE"</span><span style="color:#0074e8;">,</span></span>
<span class="t" style="left:526.50px;top:155.89px;font-size:11.0px;color:#0074e8;letter-spacing:-0.042px;-webkit-text-stroke:0.25px;"><span style="color:#0074e8;">sortable:</span><span style="color:#058b00;"> false</span><span style="color:#0074e8;">, … }</span></span>
<svg style="left:53.69999999999999px;top:176.79999999999995px" width="5" height="8" viewBox="0 0 5 8"><path d="M0 0 L5 4 L0 8 Z" fill="#8a8a8c"/></svg>
<span class="t" style="left:65.50px;top:175.89px;font-size:11.0px;color:#0074e8;letter-spacing:0.171px;-webkit-text-stroke:0.25px;"><span style="color:#0074e8;">3: Object { id:</span></span>
<span class="t" style="left:137.50px;top:175.89px;font-size:11.0px;color:#0074e8;letter-spacing:0.375px;-webkit-text-stroke:0.25px;"><span style="color:#1a1a1c;-webkit-text-stroke-width:0.1px;">"shipMode"</span><span style="color:#0074e8;">,</span></span>
<span class="t" style="left:204.00px;top:175.89px;font-size:11.0px;color:#0074e8;letter-spacing:-0.176px;-webkit-text-stroke:0.25px;"><span style="color:#0074e8;">name:</span></span>
<span class="t" style="left:237.50px;top:175.89px;font-size:11.0px;color:#0074e8;letter-spacing:-0.601px;-webkit-text-stroke:0.25px;"><span style="color:#1a1a1c;-webkit-text-stroke-width:0.1px;">"SHARED.GENERAL.LABEL_SHIPMODE"</span><span style="color:#0074e8;">,</span></span>
<span class="t" style="left:436.50px;top:175.89px;font-size:11.0px;color:#0074e8;letter-spacing:0.076px;-webkit-text-stroke:0.25px;"><span style="color:#0074e8;">sortable:</span><span style="color:#058b00;"> true</span><span style="color:#0074e8;">, … }</span></span>
<svg style="left:53.69999999999999px;top:196.79999999999995px" width="5" height="8" viewBox="0 0 5 8"><path d="M0 0 L5 4 L0 8 Z" fill="#ffffff"/></svg>
<span class="t" style="left:65.50px;top:195.89px;font-size:11.0px;color:#0074e8;letter-spacing:0.171px;-webkit-text-stroke:0.25px;"><span style="color:#ffffff;">4: Object { id:</span></span>
<span class="t" style="left:137.50px;top:195.89px;font-size:11.0px;color:#0074e8;letter-spacing:0.258px;-webkit-text-stroke:0.25px;"><span style="color:#ffffff;">"shipNode"</span><span style="color:#ffffff;">,</span></span>
<span class="t" style="left:201.50px;top:195.89px;font-size:11.0px;color:#0074e8;letter-spacing:-0.176px;-webkit-text-stroke:0.25px;"><span style="color:#ffffff;">name:</span></span>
<span class="t" style="left:235.00px;top:195.89px;font-size:11.0px;color:#0074e8;letter-spacing:-0.377px;-webkit-text-stroke:0.25px;"><span style="color:#ffffff;">"SHARED.GENERAL.LABEL_shipNode"</span><span style="color:#ffffff;">,</span></span>
<span class="t" style="left:429.00px;top:195.89px;font-size:11.0px;color:#0074e8;letter-spacing:0.023px;-webkit-text-stroke:0.25px;"><span style="color:#ffffff;">sortable:</span><span style="color:#ffffff;"> true</span><span style="color:#ffffff;">, … }</span></span>
<svg style="left:53.69999999999999px;top:216.79999999999995px" width="5" height="8" viewBox="0 0 5 8"><path d="M0 0 L5 4 L0 8 Z" fill="#8a8a8c"/></svg>
<span class="t" style="left:65.50px;top:215.89px;font-size:11.0px;color:#0074e8;letter-spacing:0.171px;-webkit-text-stroke:0.25px;"><span style="color:#0074e8;">5: Object { id:</span></span>
<span class="t" style="left:137.50px;top:215.89px;font-size:11.0px;color:#0074e8;letter-spacing:0.219px;-webkit-text-stroke:0.25px;"><span style="color:#1a1a1c;-webkit-text-stroke-width:0.1px;">"receivingNode"</span><span style="color:#0074e8;">,</span></span>
<span class="t" style="left:226.00px;top:215.89px;font-size:11.0px;color:#0074e8;letter-spacing:-0.176px;-webkit-text-stroke:0.25px;"><span style="color:#0074e8;">name:</span></span>
<span class="t" style="left:259.50px;top:215.89px;font-size:11.0px;color:#0074e8;letter-spacing:-0.504px;-webkit-text-stroke:0.25px;"><span style="color:#1a1a1c;-webkit-text-stroke-width:0.1px;">"SHARED.GENERAL.LABEL_recvNode"</span><span style="color:#0074e8;">,</span></span>
<span class="t" style="left:450.00px;top:215.89px;font-size:11.0px;color:#0074e8;letter-spacing:0.102px;-webkit-text-stroke:0.25px;"><span style="color:#0074e8;">sortable:</span><span style="color:#058b00;"> true</span><span style="color:#0074e8;">, … }</span></span>
<svg style="left:53.69999999999999px;top:236.79999999999995px" width="5" height="8" viewBox="0 0 5 8"><path d="M0 0 L5 4 L0 8 Z" fill="#8a8a8c"/></svg>
<span class="t" style="left:65.50px;top:235.89px;font-size:11.0px;color:#0074e8;letter-spacing:0.171px;-webkit-text-stroke:0.25px;"><span style="color:#0074e8;">6: Object { id:</span></span>
<span class="t" style="left:137.50px;top:235.89px;font-size:11.0px;color:#0074e8;letter-spacing:0.074px;-webkit-text-stroke:0.25px;"><span style="color:#1a1a1c;-webkit-text-stroke-width:0.1px;">"status"</span><span style="color:#0074e8;">,</span></span>
<span class="t" style="left:182.20px;top:235.89px;font-size:11.0px;color:#0074e8;letter-spacing:-0.176px;-webkit-text-stroke:0.25px;"><span style="color:#0074e8;">name:</span></span>
<span class="t" style="left:215.70px;top:235.89px;font-size:11.0px;color:#0074e8;letter-spacing:-0.684px;-webkit-text-stroke:0.25px;"><span style="color:#1a1a1c;-webkit-text-stroke-width:0.1px;">"SHARED.GENERAL.LABEL_STATUS"</span><span style="color:#0074e8;">,</span></span>
<span class="t" style="left:396.50px;top:235.89px;font-size:11.0px;color:#0074e8;letter-spacing:0.076px;-webkit-text-stroke:0.25px;"><span style="color:#0074e8;">sortable:</span><span style="color:#058b00;"> true</span><span style="color:#0074e8;">, … }</span></span>
<svg style="left:53.69999999999999px;top:253.69999999999993px" width="5" height="8" viewBox="0 0 5 8"><path d="M0 0 L5 4 L0 8 Z" fill="#8a8a8c"/></svg>
<span class="t" style="left:65.50px;top:252.79px;font-size:11.0px;color:#0074e8;letter-spacing:0.171px;-webkit-text-stroke:0.25px;"><span style="color:#0074e8;">7: Object { id:</span></span>
<span class="t" style="left:137.50px;top:252.79px;font-size:11.0px;color:#0074e8;letter-spacing:0.330px;-webkit-text-stroke:0.25px;"><span style="color:#1a1a1c;-webkit-text-stroke-width:0.1px;">"enterpriseNode"</span><span style="color:#0074e8;">,</span></span>
<span class="t" style="left:233.00px;top:252.79px;font-size:11.0px;color:#0074e8;letter-spacing:-0.176px;-webkit-text-stroke:0.25px;"><span style="color:#0074e8;">name:</span></span>
<span class="t" style="left:266.50px;top:252.79px;font-size:11.0px;color:#0074e8;letter-spacing:-0.297px;-webkit-text-stroke:0.25px;"><span style="color:#1a1a1c;-webkit-text-stroke-width:0.1px;">"SHARED.GENERAL.LABEL_enterpriseNode"</span><span style="color:#0074e8;">,</span></span>
<span class="t" style="left:490.00px;top:252.79px;font-size:11.0px;color:#0074e8;letter-spacing:0.102px;-webkit-text-stroke:0.25px;"><span style="color:#0074e8;">sortable:</span><span style="color:#058b00;"> true</span><span style="color:#0074e8;">, … }</span></span>
</div>
<svg style="left:229px;top:446px" width="153" height="23" viewBox="0 0 153 23"><rect x="3.05" y="3.45" width="146.1" height="16.1" fill="none" stroke="#f80000" stroke-width="2.5"/></svg>
<div class="a" style="left:206px;top:1px;width:614px;height:1px;background:#ffffff;"></div>
<div class="a" style="left:206px;top:1px;width:1px;height:263px;background:#ffffff;"></div>
<div class="a" style="left:0px;top:0px;width:820px;height:1px;background:#363636;"></div>
<div class="a" style="left:1px;top:0px;width:45px;height:1.2px;background:#0f62fe;"></div>
<div class="a" style="left:0px;top:0px;width:1px;height:264px;background:#6f6f6f;"></div>
<div class="a" style="left:0px;top:264px;width:1px;height:389px;background:#2a2a2a;"></div>
</body></html>
